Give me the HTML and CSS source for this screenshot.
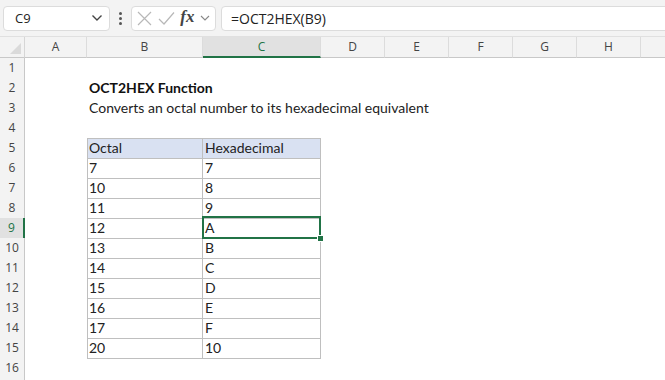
FILE: index.html
```html
<!DOCTYPE html>
<html lang="en">
<head>
    <meta charset="UTF-8">
    <title>OCT2HEX Function</title>
    <link rel="stylesheet" href="styles.css">
</head>
<body>

<div class="toolbar">
    <div class="namebox">
        <span>C9</span>
        <svg class="chev" width="12" height="8" viewBox="0 0 12 8"><path d="M1.5 1.5 L6 6 L10.5 1.5" fill="none" stroke="#444" stroke-width="1.4"/></svg>
    </div>
    <div class="dots"><i></i><i></i><i></i></div>
    <div class="fxbox">
        <svg width="15" height="15" viewBox="0 0 15 15"><path d="M1 1 L14 14 M14 1 L1 14" stroke="#b8b8b8" stroke-width="1.2"/></svg>
        <svg width="17" height="15" viewBox="0 0 17 15"><path d="M1 8 L6 13 L16 1.5" fill="none" stroke="#b8b8b8" stroke-width="1.2"/></svg>
        <span class="fx">fx</span>
        <svg width="10" height="7" viewBox="0 0 10 7"><path d="M1 1 L5 5 L9 1" fill="none" stroke="#888" stroke-width="1.1"/></svg>
    </div>
    <div class="formula">=OCT2HEX(B9)</div>
</div>

<div class="sheet">
    <div class="row head">
        <div class="corner"></div>
        <div class="ch">A</div>
        <div class="ch">B</div>
        <div class="ch sel">C</div>
        <div class="ch">D</div>
        <div class="ch">E</div>
        <div class="ch">F</div>
        <div class="ch">G</div>
        <div class="ch">H</div>
        <div class="ch last"></div>
    </div>

    <div class="row"><div class="rh">1</div></div>
    <div class="row"><div class="rh">2</div><div></div><div class="cell title">OCT2HEX Function</div></div>
    <div class="row"><div class="rh">3</div><div></div><div class="cell wide">Converts an octal number to its hexadecimal equivalent</div></div>
    <div class="row"><div class="rh">4</div></div>
    <div class="row"><div class="rh">5</div><div></div><div class="cell t th first">Octal</div><div class="cell t th">Hexadecimal</div></div>
    <div class="row"><div class="rh">6</div><div></div><div class="cell t first">7</div><div class="cell t">7</div></div>
    <div class="row"><div class="rh">7</div><div></div><div class="cell t first">10</div><div class="cell t">8</div></div>
    <div class="row"><div class="rh">8</div><div></div><div class="cell t first">11</div><div class="cell t">9</div></div>
    <div class="row"><div class="rh sel">9</div><div></div><div class="cell t first">12</div><div class="cell t active">A</div></div>
    <div class="row"><div class="rh">10</div><div></div><div class="cell t first">13</div><div class="cell t">B</div></div>
    <div class="row"><div class="rh">11</div><div></div><div class="cell t first">14</div><div class="cell t">C</div></div>
    <div class="row"><div class="rh">12</div><div></div><div class="cell t first">15</div><div class="cell t">D</div></div>
    <div class="row"><div class="rh">13</div><div></div><div class="cell t first">16</div><div class="cell t">E</div></div>
    <div class="row"><div class="rh">14</div><div></div><div class="cell t first">17</div><div class="cell t">F</div></div>
    <div class="row"><div class="rh">15</div><div></div><div class="cell t first">20</div><div class="cell t">10</div></div>
    <div class="row"><div class="rh">16</div></div>
    <div class="row"><div class="rh"></div></div>
</div>

</body>
</html>
```

FILE: styles.css
```css
/* Excel-style sheet */
body {
    margin: 0;
    background-color: #fff;
    font-family: Lato, "Open Sans", sans-serif;
    overflow: hidden;
}
.toolbar {
    height: 37px;
    background-color: #f3f3f3;
    border-bottom: 1px solid #e0e0e0;
    display: flex;
    align-items: center;
    padding-left: 3px;
    box-sizing: border-box;
}
.namebox, .fxbox, .formula {
    height: 25px;
    background-color: #fff;
    border: 1px solid #dcdcdc;
    border-radius: 4px;
    box-sizing: border-box;
    display: flex;
    align-items: center;
}
.namebox {
    width: 107px;
    padding: 0 6px 0 11px;
    justify-content: space-between;
    font-family: "Open Sans", sans-serif;
    font-size: 13px;
    color: #222;
}
.dots {
    width: 21px;
    display: flex;
    flex-direction: column;
    align-items: center;
    gap: 2px;
}
.dots i {
    width: 3px;
    height: 3px;
    border-radius: 50%;
    background-color: #555;
}
.fxbox {
    width: 85px;
    padding: 0 5px 0 5px;
    justify-content: space-between;
}
.fx {
    font-family: "Liberation Serif", serif;
    font-style: italic;
    font-weight: bold;
    font-size: 17px;
    color: #444;
    margin-top: -2px;
}
.formula {
    flex: 1;
    margin-left: 5px;
    margin-right: -6px;
    padding-left: 9px;
    font-family: "Open Sans", sans-serif;
    font-size: 14px;
    color: #222;
}
.row {
    display: grid;
    grid-template-columns: 25px 62px 116px 118px 64px 64px 64px 64px 64px 24px;
    height: 20px;
}
.row.head {
    height: 21px;
}
.corner {
    background-color: #f3f3f3;
    border-right: 1px solid #d6d6d6;
    border-bottom: 1px solid #c8c8c8;
    position: relative;
}
.corner::after {
    content: "";
    position: absolute;
    right: 3px;
    bottom: 3px;
    border-left: 11px solid transparent;
    border-bottom: 11px solid #dadada;
}
.ch {
    background-color: #f3f3f3;
    border-right: 1px solid #dcdcdc;
    border-bottom: 1px solid #c8c8c8;
    font-family: "Open Sans", sans-serif;
    font-size: 12px;
    color: #444;
    text-align: center;
    line-height: 20px;
}
.ch.last {
    border-right: none;
}
.ch.sel {
    background-color: #e1e1e1;
    color: #217346;
    border-bottom: 2px solid #217346;
    line-height: 19px;
}
.rh {
    background-color: #f3f3f3;
    border-right: 1px solid #c8c8c8;
    border-bottom: 1px solid #dcdcdc;
    font-family: "Open Sans", sans-serif;
    font-size: 12px;
    color: #444;
    text-align: center;
    line-height: 20px;
}
.rh.sel {
    background-color: #e1e1e1;
    color: #217346;
    border-right: 2px solid #217346;
}
.cell {
    font-size: 14px;
    line-height: 20px;
    padding-left: 2px;
    color: #222;
    white-space: nowrap;
    box-sizing: border-box;
}
.title {
    font-weight: bold;
    color: #111;
}
.t {
    border-right: 1px solid #bfbfbf;
    border-bottom: 1px solid #bfbfbf;
    line-height: 19px;
}
.t.first {
    border-left: 1px solid #bfbfbf;
    padding-left: 1px;
}
.th {
    background-color: #d9e1f2;
    border-top: 1px solid #bfbfbf;
    line-height: 18px;
}
.active {
    position: relative;
}
.active::before {
    content: "";
    position: absolute;
    left: -1px;
    top: -2px;
    right: -1px;
    bottom: -1px;
    border: 2px solid #217346;
}
.active::after {
    content: "";
    position: absolute;
    right: -4px;
    bottom: -4px;
    width: 5px;
    height: 5px;
    background-color: #217346;
    border: 1px solid #fff;
}
```
